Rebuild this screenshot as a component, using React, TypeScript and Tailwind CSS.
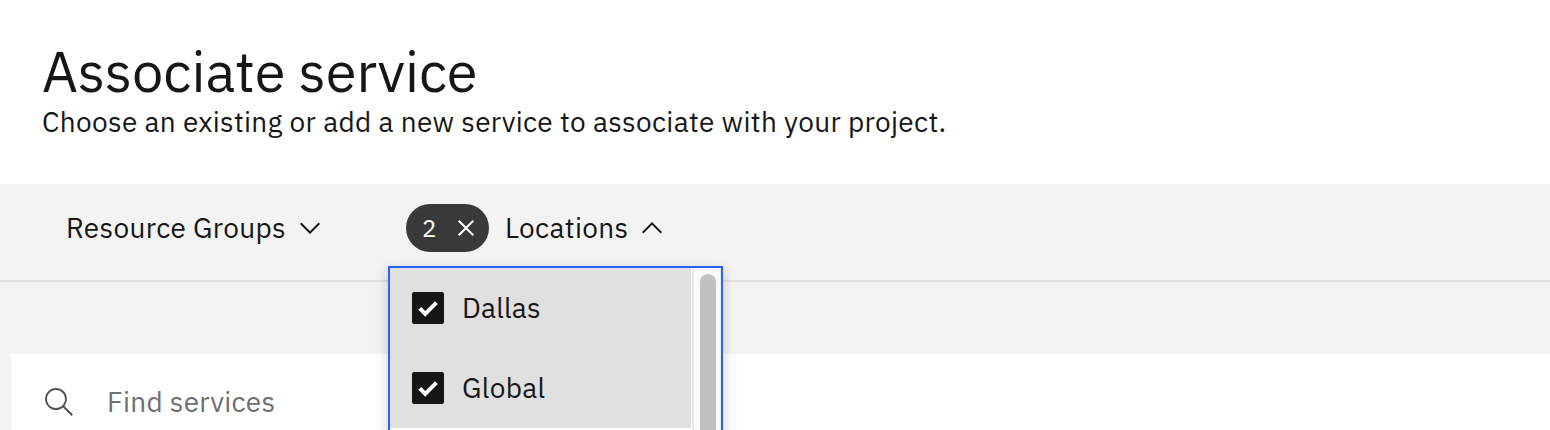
import React from "react";

const CHEVRON_DOWN = "M8 11L3 6 3.7 5.3 8 9.6 12.3 5.3 13 6z";
const CHEVRON_UP = "M8 5L13 10 12.3 10.7 8 6.4 3.7 10.7 3 10z";
const SEARCH =
  "M15,14.3L10.7,10c1.9-2.3,1.6-5.8-0.7-7.7S4.2,0.7,2.3,3S0.7,8.8,3,10.7c2,1.7,5,1.7,7,0l4.3,4.3L15,14.3z M2,6.5C2,4,4,2,6.5,2S11,4,11,6.5S9,11,6.5,11S2,9,2,6.5z";

function Icon({ d, className = "" }: { d: string; className?: string }) {
  return (
    <svg viewBox="0 0 16 16" fill="currentColor" aria-hidden="true" className={`size-8 shrink-0 ${className}`}>
      <path d={d} />
    </svg>
  );
}

function Option({ label, className }: { label: string; className: string }) {
  return (
    <label className="flex h-20 items-center bg-[#e0e0e0] pl-[22px]">
      <span className="flex size-8 shrink-0 items-center justify-center rounded-[2px] bg-[#161616]">
        <svg viewBox="0 0 32 32" className="size-8" fill="none" stroke="#fff" strokeWidth="4">
          <path d="M7.8 16.4L13.2 21.8L24.4 10.6" />
        </svg>
      </span>
      <span className={`ml-[18px] whitespace-nowrap ${className}`}>{label}</span>
    </label>
  );
}

function LocationsMenu() {
  return (
    <div className="absolute top-[82px] left-[388px] flex h-[300px] w-[335px] border-2 border-[#2962ff] bg-white shadow-[0_4px_12px_rgba(0,0,0,0.2)]">
      <div className="w-[301px]">
        <Option label="Dallas" className="tracking-[0.24px]" />
        <Option label="Global" className="tracking-[0.3px]" />
      </div>
      <div className="ml-px flex flex-1 border-r border-l-2 border-r-[#ededed] border-l-[#e8e8e8] bg-[#fafafa] pt-1.5 pl-1.5">
        <div className="w-4 rounded-t-full bg-[#c1c1c1]" />
      </div>
    </div>
  );
}

export default function App() {
  return (
    <div className="h-[430px] w-[1550px] overflow-hidden bg-[#f3f3f3] font-['IBM_Plex_Sans',Roboto,sans-serif] text-[28px] leading-9 text-[#161616]">
      <header className="h-[184px] bg-white pt-[39px] pl-[42px]">
        <h1 className="mb-px h-16 text-[56px] leading-16 font-normal tracking-[-0.04px] whitespace-nowrap">Associate service</h1>
        <p className="whitespace-nowrap tracking-[0.32px]">
          Choose an existing or add a new service to associate with your project.
        </p>
      </header>

      <div className="relative z-10 flex h-[98px] border-b-2 border-[#e0e0e0] pt-5">
        <button className="flex h-12 w-[340px] items-center pl-[66px]">
          <span className="w-[228px] text-left whitespace-nowrap tracking-[0.32px]">Resource Groups</span>
          <Icon d={CHEVRON_DOWN} />
        </button>
        <div className="flex h-12 items-center pl-[66px]">
          <span className="flex h-12 w-[83px] items-center rounded-full bg-[#393939] pl-4 text-2xl text-white">
            <span className="w-7">2</span>
            <svg viewBox="0 0 32 32" fill="currentColor" className="size-8">
              <path d="M24 9.4L22.6 8 16 14.6 9.4 8 8 9.4 14.6 16 8 22.6 9.4 24 16 17.4 22.6 24 24 22.6 17.4 16 24 9.4z" />
            </svg>
          </span>
          <button className="ml-4 flex items-center">
            <span className="w-[131px] text-left whitespace-nowrap tracking-[0.32px]">Locations</span>
            <Icon d={CHEVRON_UP} />
          </button>
        </div>
        <LocationsMenu />
      </div>

      <div className="mt-[72px] ml-[11px] flex h-24 items-center bg-white pl-8">
        <Icon d={SEARCH} className="text-[#525252]" />
        <span className="ml-8 whitespace-nowrap tracking-[0.28px] text-[#6f6f6f]">Find services</span>
      </div>
    </div>
  );
}
